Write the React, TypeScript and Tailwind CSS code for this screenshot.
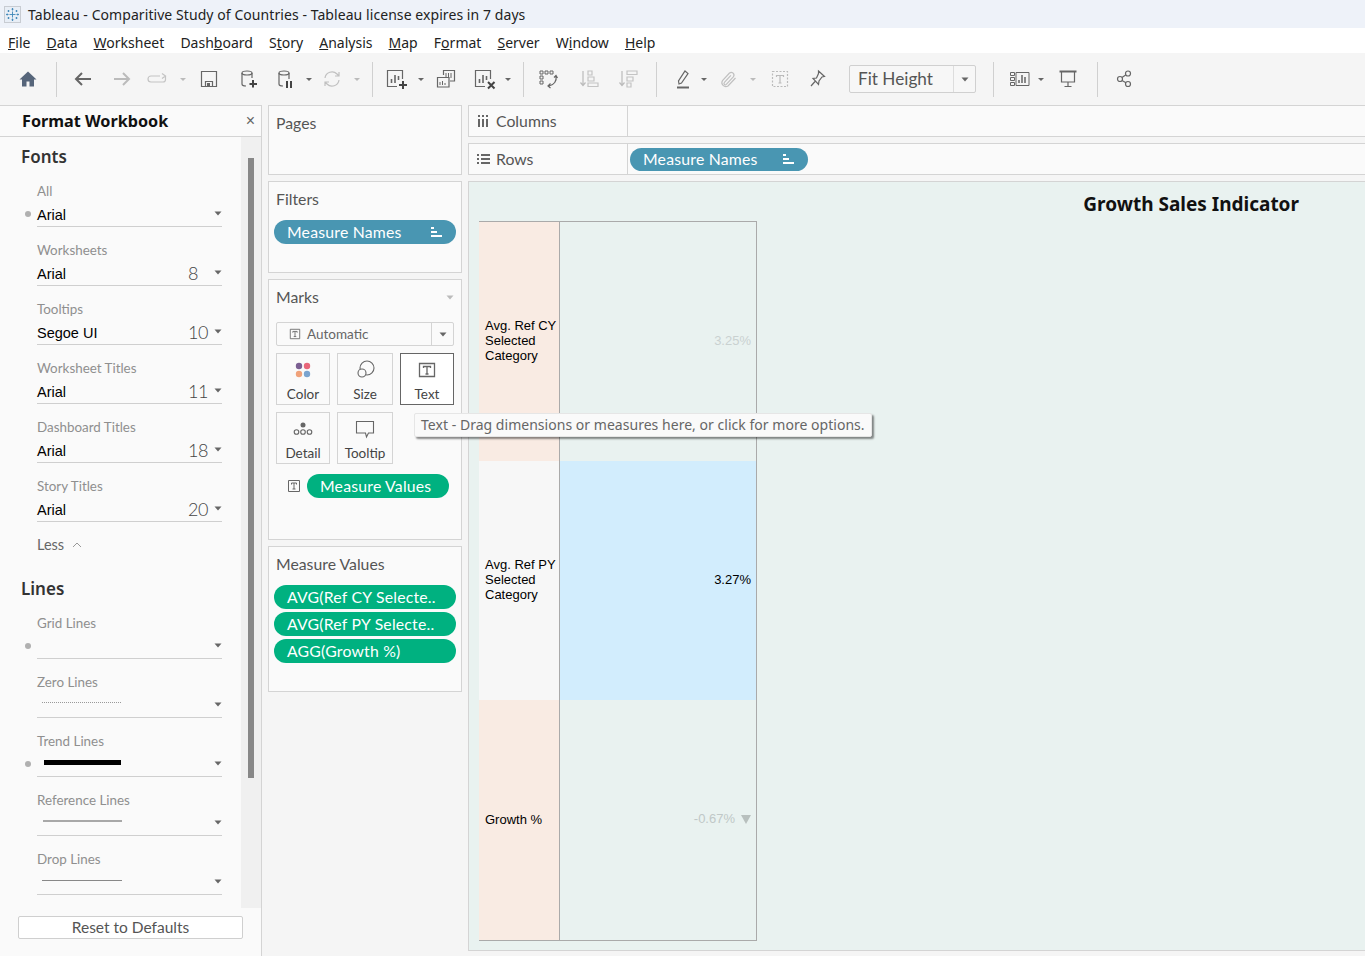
import React from "react";

const BOOK = "font-['Lato','Noto_Sans',sans-serif]";
const UI = "font-['Noto_Sans','Open_Sans',sans-serif]";
const ARIAL = "font-['Liberation_Sans',Arial,sans-serif]";

function Caret({ className = "", color = "#666" }: { className?: string; color?: string }) {
  return (
    <svg width="8" height="5" viewBox="0 0 8 5" className={"shrink-0 " + className}>
      <path d="M0.500 0.500h7L4 4.500z" fill={color} />
    </svg>
  );
}

function TCaret({ className = "", color = "#666" }: { className?: string; color?: string }) {
  return (
    <svg width="8" height="5" viewBox="0 0 8 5" className={"shrink-0 " + className}>
      <path d="M1 1h6L4 4z" fill={color} />
    </svg>
  );
}

function I({ className = "", children }: { className?: string; children: React.ReactNode }) {
  return (
    <svg width="24" height="24" viewBox="0 0 24 24" fill="none" stroke="#666" strokeWidth="1.2" className={"shrink-0 " + className}>
      {children}
    </svg>
  );
}

function Sep({ className }: { className: string }) {
  return <div className={"w-px h-[35px] bg-[#d0d0d0] shrink-0 " + className} />;
}

function Toolbar() {
  return (
    <div className="h-[52px] bg-[#f5f5f5] flex items-center pl-[16px] shrink-0">
      <I>
        <path d="M12 4.500 3.500 12.500H6v7h4.500v-5h3v5H18v-7h2.500z" fill="#56657a" stroke="none" />
      </I>
      <Sep className="ml-[16px]" />
      <I className="ml-[14px]">
        <path d="M20 12H5M11 6l-6 6 6 6" strokeWidth="2" />
      </I>
      <I className="ml-[15px]">
        <path d="M4 12h15M13 6l6 6-6 6" stroke="#bbb" strokeWidth="2" />
      </I>
      <I className="ml-[12px]">
        <path d="M14 9H5a2.500 2.500 0 0 0 0 6h12a2.500 2.500 0 0 0 2.500-2.500V9M16 6.500 19.500 9 16 11.500" stroke="#c4c4c4" />
      </I>
      <TCaret color="#bbb" className="ml-[9px]" />
      <I className="ml-[10px]">
        <path d="M4.500 4.500h15v15h-15z" />
        <path d="M8.500 14.500h7v5h-7z" />
        <path d="M10 16h3v3.500h-3z" fill="#666" stroke="none" />
      </I>
      <I className="ml-[15px]">
        <ellipse cx="11" cy="6" rx="5" ry="2" />
        <path d="M6 6v11c0 1 1.500 2 4 2M16 6v5" />
        <path d="M17 13v7.500M13.500 17h7.500" strokeWidth="2" stroke="#444" />
      </I>
      <I className="ml-[13px]">
        <ellipse cx="11" cy="6" rx="5" ry="2" />
        <path d="M6 6v11c0 1 1.500 2 4 2M16 6v6" />
        <path d="M14 14v7M18 14v7" strokeWidth="2" stroke="#444" />
      </I>
      <TCaret className="ml-[8px]" />
      <I className="ml-[7px]">
        <path d="M5 11a7 7 0 0 1 12-4l2 2M19 13a7 7 0 0 1-12 4l-2-2M19 5v4h-4M5 19v-4h4" stroke="#c0c0c0" />
      </I>
      <TCaret color="#bbb" className="ml-[9px]" />
      <Sep className="ml-[11px]" />
      <I className="ml-[12px]">
        <path d="M17.500 12V3.500h-15v16H12" />
        <path d="M6.500 16v-4M10 16V8M13.500 13V9" strokeWidth="1.600" />
        <path d="M18 14v8M14 18h8" strokeWidth="2" stroke="#444" />
      </I>
      <TCaret className="ml-[8px]" />
      <I className="ml-[9px]">
        <path d="M9.500 8V3.500h11V14H16M3.500 10.500H15V20H3.500z" />
        <path d="M12 6v5M14.500 6v5M17 6v5M6 18v-3M8.500 18v-4M11 18v-2" strokeWidth="1" />
      </I>
      <I className="ml-[15px]">
        <path d="M17.500 12V3.500h-15v16H12" />
        <path d="M6.500 16v-4M10 16V8M13.500 13V9" strokeWidth="1.600" />
        <path d="m15 15 6.500 6.500M21.500 15 15 21.500" strokeWidth="2" stroke="#444" />
      </I>
      <TCaret className="ml-[7px]" />
      <Sep className="ml-[11px]" />
      <I className="ml-[12px]">
        <path d="M4 4h3v3H4zM9 4h3v3H9zM14 4h3v3h-3zM4 9h3v3H4zM4 14h3v3H4z" strokeWidth="1" />
        <path d="M20 9c1 5-2 9-7 10M21.500 11 20 8.500 18 10.500M14.500 16.500 12 19l2.500 2" />
      </I>
      <I className="ml-[17px]">
        <path d="M6 4v14M3.500 15.500 6 18.500l2.500-3" stroke="#bbb" />
        <path d="M11 4h4v4h-4zM11 10h6v4h-6zM11 16h10v3.500H11z" stroke="#c4c4c4" />
      </I>
      <I className="ml-[15px]">
        <path d="M6 4v14M3.500 15.500 6 18.500l2.500-3" stroke="#bbb" />
        <path d="M11 4h10v3.500H11zM11 10h6v4h-6zM11 16h4v4h-4z" stroke="#c4c4c4" />
      </I>
      <Sep className="ml-[16px]" />
      <I className="ml-[14px]">
        <path d="M14 4 17 6.500 10.500 16 8 17l-.5-3z" />
        <path d="M6 20.500h12" strokeWidth="2" />
      </I>
      <TCaret className="ml-[5px]" />
      <I className="ml-[9px]">
        <path d="M18.500 11 11 19a4 4 0 0 1-5.500-5.500l7-7.500a2.700 2.700 0 0 1 3.800 3.800l-7 7.500a1.300 1.300 0 0 1-1.900-1.900l6.500-7" stroke="#c0c0c0" />
      </I>
      <TCaret color="#bbb" className="ml-[8px]" />
      <I className="ml-[11px]">
        <path d="M4.500 4.500h15v15h-15z" stroke="#bbb" strokeDasharray="2 1.500" />
        <path d="M8.500 10V8.500h7V10M12 8.500V16M10.500 16h3" stroke="#bbb" />
      </I>
      <I className="ml-[13px]">
        <path d="M13.500 4 19.500 9.500 17 10l-3 4-.5 3.500L8 11.500 11.500 11l2-4.500zM10 14.500 6 19" />
      </I>
      <div className={"ml-[20px] w-[127px] h-[28px] shrink-0 flex border border-[#d0d0d0] rounded-[2px] bg-[#f7f7f7] " + BOOK}>
        <span className="flex-1 pl-[8px] text-[17.2px] leading-[26px] text-[#555]">Fit Height</span>
        <span className="w-[22px] border-l border-[#ddd] flex items-center justify-center">
          <Caret />
        </span>
      </div>
      <Sep className="ml-[17px]" />
      <I className="ml-[14px]">
        <path d="M2.500 5.500h4v3h-4zM2.500 10.500h4v3h-4zM2.500 15.500h4v3h-4zM8 5.500h13v13H8z" strokeWidth="1" />
        <path d="M11 16v-3M14 16V8M17 16v-6" strokeWidth="1.500" />
      </I>
      <TCaret className="ml-[5px]" />
      <I className="ml-[11px]">
        <path d="M3.500 4.500h17" strokeWidth="2" />
        <path d="M5.500 5v10h13V5M12 15v4M8.500 19.500h7" />
      </I>
      <Sep className="ml-[17px]" />
      <I className="ml-[14px]">
        <circle cx="8" cy="12" r="2.500" />
        <circle cx="16" cy="6.500" r="2.500" />
        <circle cx="16" cy="17" r="2.500" />
        <path d="m10 10.500 4-2.800M10 13.500l4 2.300" />
      </I>
    </div>
  );
}

const MENU: [string, string, string][] = [
  ["", "F", "ile"],
  ["", "D", "ata"],
  ["", "W", "orksheet"],
  ["Dash", "b", "oard"],
  ["S", "t", "ory"],
  ["", "A", "nalysis"],
  ["", "M", "ap"],
  ["F", "o", "rmat"],
  ["", "S", "erver"],
  ["W", "i", "ndow"],
  ["", "H", "elp"],
];

function FormatRow({ label, value, size, dot, line }: { label: string; value?: string; size?: string; dot?: boolean; line?: React.ReactNode }) {
  return (
    <div className="relative ml-[37px] w-[185px] h-[46px] mb-[13px]">
      <div className={"h-[20px] text-[13.4px] leading-[20px] text-[#8f8f8f] " + BOOK}>{label}</div>
      <div className="h-[26px] border-b border-[#cfcfcf] flex items-center">
        {value && <span className={"mt-[5px] text-[14.5px] text-black " + ARIAL}>{value}</span>}
        {line}
        {size && <span className={"ml-auto w-[26px] text-[18px] tracking-[-0.5px] leading-none font-light text-[#444] " + BOOK}>{size}</span>}
        <Caret className={size ? "" : "ml-auto"} />
      </div>
      {dot && <span className="absolute left-[-12px] top-[30px] w-[6px] h-[6px] rounded-full bg-[#b0b0b0]" />}
    </div>
  );
}

function Sidebar() {
  return (
    <div className="w-[262px] shrink-0 border-r border-[#d4d4d4] bg-[#fafafa] flex flex-col">
      <div className="h-[32px] shrink-0 border-y border-[#d4d4d4] flex items-center pl-[22px] pr-[6px]">
        <span className={"text-[16.2px] font-bold text-[#111] " + UI}>Format Workbook</span>
        <span className={"ml-auto text-[16px] leading-none text-[#666] " + ARIAL}>×</span>
      </div>
      <div className="flex-1 flex min-h-0">
        <div className="flex-1 overflow-hidden">
          <div className={"pl-[21px] h-[44px] flex items-end pb-[12px] text-[17px] font-semibold text-[#333] " + UI}>Fonts</div>
          <FormatRow label="All" value="Arial" dot />
          <FormatRow label="Worksheets" value="Arial" size="8" />
          <FormatRow label="Tooltips" value="Segoe UI" size="10" />
          <FormatRow label="Worksheet Titles" value="Arial" size="11" />
          <FormatRow label="Dashboard Titles" value="Arial" size="18" />
          <FormatRow label="Story Titles" value="Arial" size="20" />
          <div className={"ml-[37px] mt-[1px] h-[20px] flex items-center text-[14.5px] text-[#666] " + BOOK}>
            Less
            <svg width="10" height="6" viewBox="0 0 10 6" className="ml-[8px]" fill="none" stroke="#999" strokeWidth="1">
              <path d="m1 5 4-4 4 4" />
            </svg>
          </div>
          <div className={"pl-[21px] h-[49px] flex items-end pb-[2px] mb-[10px] -mt-[1px] text-[17px] font-semibold text-[#333] " + UI}>Lines</div>
          <FormatRow label="Grid Lines" dot />
          <FormatRow label="Zero Lines" line={<span className="ml-[5px] w-[79px] border-t border-dotted border-[#999] -mt-[4px]" />} />
          <FormatRow label="Trend Lines" dot line={<span className="ml-[7px] w-[77px] h-[5px] bg-black -mt-[3px]" />} />
          <FormatRow label="Reference Lines" line={<span className="ml-[6px] w-[79px] h-[2px] bg-[#a8a8a8] -mt-[4px]" />} />
          <FormatRow label="Drop Lines" line={<span className="ml-[5px] w-[80px] h-px bg-[#888] -mt-[3px]" />} />
        </div>
        <div className="w-[20px] bg-[#f0f0f0] pt-[21px] pl-[7px] shrink-0">
          <div className="w-[6px] h-[620px] bg-[#888]" />
        </div>
      </div>
      <div className="h-[48px] shrink-0 pl-[18px] pt-[8px]">
        <div className={"w-[225px] h-[23px] border border-[#cfcfcf] rounded-[2px] bg-white text-center text-[15.5px] leading-[21px] text-[#555] " + BOOK}>Reset to Defaults</div>
      </div>
    </div>
  );
}

function SortIcon() {
  return (
    <svg width="11" height="11" viewBox="0 0 11 11" className="shrink-0" fill="#fff">
      <path d="M0 0h3v2H0zM0 4h6v2H0zM0 8h11v2H0z" />
    </svg>
  );
}

function Pill({ text, color, className = "", sort }: { text: string; color: string; className?: string; sort?: boolean }) {
  return (
    <div className={"flex items-center rounded-full pl-[13px] pr-[14px] text-white text-[15.8px] tracking-[0.2px] shrink-0 " + BOOK + " " + color + " " + className}>
      <span className="whitespace-nowrap">{text}</span>
      {sort && <span className="ml-auto"><SortIcon /></span>}
    </div>
  );
}

function Card({ title, className = "", children }: { title: string; className?: string; children?: React.ReactNode }) {
  return (
    <div className={"border border-[#d4d4d4] bg-[#fafafa] shrink-0 " + className}>
      <div className={"h-[36px] pl-[7px] pt-[7px] text-[15.8px] leading-[20px] text-[#555] " + BOOK}>{title}</div>
      {children}
    </div>
  );
}

function MarkBtn({ label, active, children }: { label: string; active?: boolean; children: React.ReactNode }) {
  return (
    <div className={"h-[52px] flex flex-col items-center border " + (active ? "border-[#666] bg-white" : "border-[#d4d4d4] bg-[#fafafa]")}>
      <svg width="24" height="24" viewBox="0 0 24 24" fill="none" stroke="#666" strokeWidth="1.100" className="mt-[4px] shrink-0">
        {children}
      </svg>
      <span className={"text-[13.5px] leading-[18px] mt-[3px] text-[#444] " + BOOK}>{label}</span>
    </div>
  );
}

function TBox({ size = 14 }: { size?: number }) {
  return (
    <svg width={size} height={size} viewBox="0 0 14 14" fill="none" stroke="#666" strokeWidth="1" className="shrink-0">
      <path d="M1.500 1.500h11v11h-11z" />
      <path d="M4.500 5.500v-1.500h5v1.500M7 4v6M5.500 10h3" />
    </svg>
  );
}

function Cards() {
  return (
    <div className="w-[194px] shrink-0 ml-[6px] flex flex-col gap-[6px]">
      <Card title="Pages" className="h-[70px]" />
      <Card title="Filters" className="h-[92px]">
        <Pill text="Measure Names" color="bg-[#4996b2]" sort className="h-[24px] mx-[5px] mt-[2px]" />
      </Card>
      <Card title="Marks" className="h-[261px] relative">
        <Caret color="#bbb" className="absolute right-[7px] top-[15px]" />
        <div className="mx-[7px] mt-[6px] h-[24px] border border-[#d4d4d4] rounded-[2px] flex items-center bg-[#fafafa]">
          <span className="ml-[12px]"><TBox size={12} /></span>
          <span className={"ml-[6px] text-[13.5px] text-[#666] " + BOOK}>Automatic</span>
          <span className="ml-auto w-[22px] h-full border-l border-[#d4d4d4] flex items-center justify-center">
            <Caret />
          </span>
        </div>
        <div className="mx-[7px] mt-[7px] grid grid-cols-[54px_56px_54px] gap-x-[7px] gap-y-[7px]">
          <MarkBtn label="Color">
            <circle cx="8" cy="8" r="3.200" fill="#7b5f92" stroke="none" />
            <circle cx="16" cy="8" r="3.200" fill="#e8667a" stroke="none" />
            <circle cx="8" cy="16" r="3.200" fill="#f0a27a" stroke="none" />
            <circle cx="16" cy="16" r="3.200" fill="#7ba4cf" stroke="none" />
          </MarkBtn>
          <MarkBtn label="Size">
            <circle cx="14" cy="10" r="7" />
            <circle cx="9" cy="15" r="4" fill="#fafafa" />
          </MarkBtn>
          <MarkBtn label="Text" active>
            <path d="M4.500 5.500h15v13h-15z" strokeWidth="1.300" />
            <path d="M8.500 10V8.500h7V10M12 8.500V16M10.500 16h3" strokeWidth="1.300" />
          </MarkBtn>
          <MarkBtn label="Detail">
            <circle cx="12" cy="8" r="2.500" fill="#666" stroke="none" />
            <circle cx="5.500" cy="15" r="2.300" />
            <circle cx="12" cy="15" r="2.300" />
            <circle cx="18.500" cy="15" r="2.300" />
          </MarkBtn>
          <MarkBtn label="Tooltip">
            <path d="M3.500 4.500h17v11.500h-5l-2 4-1-4H3.500z" />
          </MarkBtn>
        </div>
        <div className="flex items-center mt-[10px] ml-[18px]">
          <TBox size={14} />
          <Pill text="Measure Values" color="bg-[#00b180]" className="h-[24px] ml-[6px] w-[142px]" />
        </div>
      </Card>
      <Card title="Measure Values" className="h-[146px]">
        <div className="mx-[5px] mt-[2px] flex flex-col gap-[3px]">
          <Pill text="AVG(Ref CY Selecte.." color="bg-[#00b180]" className="h-[24px]" />
          <Pill text="AVG(Ref PY Selecte.." color="bg-[#00b180]" className="h-[24px]" />
          <Pill text="AGG(Growth %)" color="bg-[#00b180]" className="h-[24px]" />
        </div>
      </Card>
    </div>
  );
}

function Shelf({ label, icon, children, className = "" }: { label: string; icon: React.ReactNode; children?: React.ReactNode; className?: string }) {
  return (
    <div className={"h-[32px] border-y border-[#d4d4d4] bg-[#fafafa] flex shrink-0 " + className}>
      <div className={"w-[160px] border-x border-[#d4d4d4] flex items-center pl-[8px] text-[15.8px] text-[#555] " + BOOK}>
        <span className="w-[19px] flex">{icon}</span>
        {label}
      </div>
      {children}
    </div>
  );
}

function TableRow({ label, h, head, body, children }: { label: string[]; h: string; head: string; body: string; children: React.ReactNode }) {
  return (
    <div className={"flex " + h}>
      <div className={"w-[81px] border-r border-[#aaa] flex flex-col justify-center pl-[6px] pb-[2px] text-[13px] leading-[15px] text-black whitespace-nowrap " + head}>
        {label.map((l) => (
          <div key={l}>{l}</div>
        ))}
      </div>
      <div className={"flex-1 flex items-center justify-end pr-[5px] pb-[2px] text-[13px] " + body}>{children}</div>
    </div>
  );
}

function View() {
  return (
    <div className="flex-1 min-w-0 ml-[6px] flex flex-col">
      <Shelf
        label="Columns"
        icon={
          <svg width="12" height="12" viewBox="0 0 12 12" fill="#666">
            <path d="M1 4h2v8H1zM5 4h2v8H5zM9 4h2v8H9zM1 0h2v2H1zM5 0h2v2H5zM9 0h2v2H9z" />
          </svg>
        }
      />
      <Shelf
        label="Rows"
        className="mt-[6px]"
        icon={
          <svg width="13" height="12" viewBox="0 0 13 12" fill="#666">
            <path d="M0 1h2v2H0zM0 5h2v2H0zM0 9h2v2H0zM4 1h9v2H4zM4 5h9v2H4zM4 9h9v2H4z" />
          </svg>
        }
      >
        <div className="pl-[2px] pt-[4px]">
          <Pill text="Measure Names" color="bg-[#4996b2]" sort className="h-[23px] w-[178px] pb-[1px]" />
        </div>
      </Shelf>
      <div className="mt-[6px] h-[770px] border-y border-l border-[#d4d4d4] bg-[#e9f2f0] flex flex-col">
        <div className={"h-[39px] shrink-0 flex items-center justify-end pr-[66px] pt-[6px] text-[19px] font-bold text-[#111] " + UI}>Growth Sales Indicator</div>
        <div className={"ml-[10px] w-[278px] border-y border-r border-[#aaa] h-[720px] " + ARIAL}>
          <TableRow label={["Avg. Ref CY", "Selected", "Category"]} h="h-[239px]" head="bg-[#f9ebe3]" body="text-[#c9d1d0]">
            3.25%
          </TableRow>
          <TableRow label={["Avg. Ref PY", "Selected", "Category"]} h="h-[239px]" head="bg-[#f7f7f7]" body="bg-[#d2edfd] text-black">
            3.27%
          </TableRow>
          <TableRow label={["Growth %"]} h="h-[240px]" head="bg-[#f9ebe3]" body="text-[#c0c8c7]">
            -0.67%
            <svg width="10" height="9" viewBox="0 0 10 9" className="ml-[6px]">
              <path d="M0 0h10L5 9z" fill="#b8c0be" />
            </svg>
          </TableRow>
        </div>
      </div>
    </div>
  );
}

export default function App() {
  return (
    <div className="relative w-[1365px] h-[956px] overflow-hidden bg-[#f5f5f5] flex flex-col">
      <div className={"h-[28px] shrink-0 bg-[#eef2f9] flex items-center pl-[4px] text-[14px] tracking-[0.07px] text-[#222] " + UI}>
        <svg width="17" height="17" viewBox="0 0 17 17" className="shrink-0">
          <rect x="0.500" y="0.500" width="16" height="16" fill="#e8eef6" stroke="#c8ccd2" />
          <path d="M8.500 5.500v6M5.500 8.500h6M8.500 2v2.500M7.500 3.200h2M8.500 12.500V15M7.500 13.800h2M2 8.500h2.500M3.200 7.500v2M12.500 8.500H15M13.800 7.500v2M4.500 4v2M3.500 5h2M12.500 4v2M11.500 5h2M4.500 11v2M3.500 12h2M12.500 11v2M11.500 12h2" stroke="#3f87b8" strokeWidth="0.900" />
        </svg>
        <span className="ml-[7px]">Tableau - Comparitive Study of Countries - Tableau license expires in 7 days</span>
      </div>
      <div className={"h-[25px] shrink-0 bg-white flex items-center pl-[8px] pt-[3px] gap-[16.1px] text-[14px] text-[#222] " + UI}>
        {MENU.map(([a, b, c]) => (
          <span key={a + b + c} className="whitespace-nowrap">
            {a}
            <span className="underline">{b}</span>
            {c}
          </span>
        ))}
      </div>
      <Toolbar />
      <div className="flex-1 min-h-0 flex">
        <Sidebar />
        <Cards />
        <View />
      </div>
      <div className={"absolute left-[414px] top-[413px] w-[458px] h-[24px] bg-[#fafafa] border border-[#e6e6e6] rounded-[2px] shadow-[2px_2px_2px_rgba(0,0,0,0.45)] pl-[6px] text-[14px] tracking-[0.03px] leading-[21px] text-[#666] whitespace-nowrap " + UI}>
        Text - Drag dimensions or measures here, or click for more options.
      </div>
    </div>
  );
}
